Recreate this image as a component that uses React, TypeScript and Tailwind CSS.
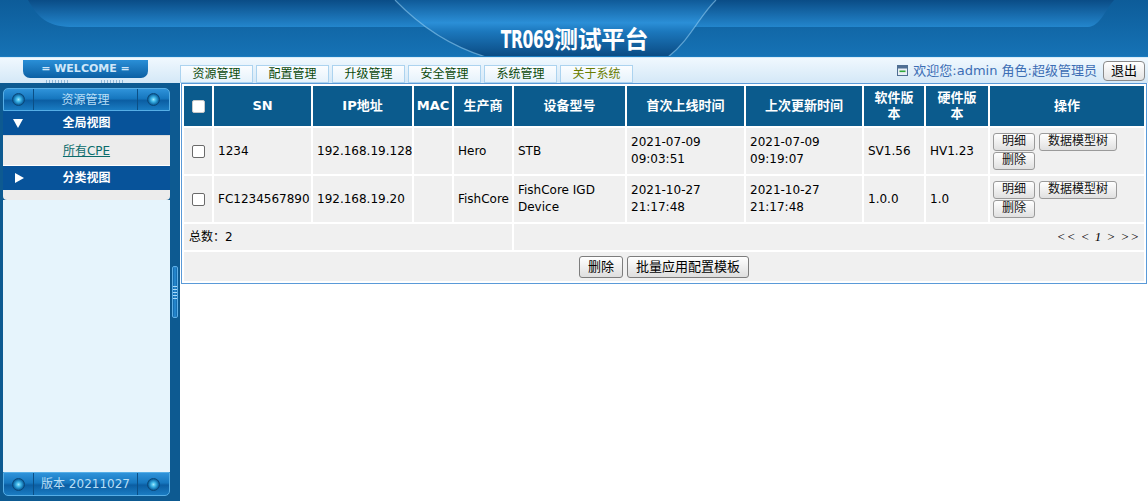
import React from "react";

const cols = [28, 97, 99, 38, 58, 111, 117, 116, 60, 62, 154];

const rows = [
  {
    sn: "1234",
    ip: "192.168.19.128",
    mac: "",
    vendor: "Hero",
    model: "STB",
    first: ["2021-07-09", "09:03:51"],
    last: ["2021-07-09", "09:19:07"],
    sw: "SV1.56",
    hw: "HV1.23",
  },
  {
    sn: "FC1234567890",
    ip: "192.168.19.20",
    mac: "",
    vendor: "FishCore",
    model: "FishCore IGD Device",
    first: ["2021-10-27", "21:17:48"],
    last: ["2021-10-27", "21:17:48"],
    sw: "1.0.0",
    hw: "1.0",
  },
];

const tabs = ["资源管理", "配置管理", "升级管理", "安全管理", "系统管理", "关于系统"];

function Btn({ children, big }: { children: React.ReactNode; big?: boolean }) {
  return (
    <button
      className={
        big
          ? "h-[22px] px-[8px] border border-[#7d7d7d] rounded-[3px] bg-linear-to-b from-white to-[#dedede] text-[13px] leading-[18px] text-black"
          : "h-[18px] px-[8px] border border-[#9a9a9a] rounded-[3px] bg-linear-to-b from-white to-[#e0e0e0] text-[12px] leading-[15px] text-[#111]"
      }
    >
      {children}
    </button>
  );
}

function Check({ head }: { head?: boolean }) {
  return (
    <span
      className={
        head
          ? "inline-block w-[13px] h-[13px] rounded-[2px] border border-[#c9c9c9] bg-white align-middle"
          : "inline-block w-[13px] h-[13px] rounded-[2px] border border-[#6a6a6a] bg-white align-middle"
      }
    />
  );
}

function Dot() {
  return (
    <span className="block w-[13px] h-[13px] rounded-full border border-[#0a4778] bg-[radial-gradient(circle_at_50%_50%,#9fe8ff_0%,#3cb4e6_30%,#0f6aa8_65%,#083e6c_100%)]" />
  );
}

function Bar({ children, top }: { children: React.ReactNode; top?: boolean }) {
  return (
    <div
      className={
        top
          ? "h-[23px] flex items-stretch rounded-t-[5px] border border-[#56aee6] bg-[linear-gradient(#2f93da,#1677bf_45%,#0b5ea3_55%,#1a7cc2)]"
          : "h-[24px] flex items-stretch rounded-b-[5px] border border-[#56aee6] bg-[linear-gradient(#2f93da,#1677bf_45%,#0b5ea3_55%,#1a7cc2)]"
      }
    >
      <div className="w-[29px] flex items-center justify-center">
        <Dot />
      </div>
      <div className="w-px bg-[#0b4f86]" />
      <div className="flex-1 flex items-center justify-center text-[12px] text-[#b8def6]">{children}</div>
      <div className="w-px bg-[#0b4f86]" />
      <div className="w-[31px] flex items-center justify-center">
        <Dot />
      </div>
    </div>
  );
}

function Tri({ down }: { down?: boolean }) {
  return (
    <svg width="10" height="10" viewBox="0 0 10 10">
      {down ? <polygon points="0,1 10,1 5,10" fill="#fff" /> : <polygon points="1,0 10,5 1,10" fill="#fff" />}
    </svg>
  );
}

function Banner() {
  return (
    <svg className="absolute inset-0 w-full h-full" viewBox="0 0 1148 57" preserveAspectRatio="none">
      <defs>
        <linearGradient id="band" x1="0" y1="0" x2="0" y2="1">
          <stop offset="0" stopColor="#0a4c86" />
          <stop offset="1" stopColor="#2386cd" />
        </linearGradient>
        <linearGradient id="low" x1="0" y1="0" x2="0" y2="1">
          <stop offset="0" stopColor="#0d5c99" />
          <stop offset="1" stopColor="#1673b6" />
        </linearGradient>
        <linearGradient id="tab" x1="0" y1="0" x2="0" y2="1">
          <stop offset="0" stopColor="#0f5a98" />
          <stop offset="0.4" stopColor="#2b8fd7" />
          <stop offset="0.55" stopColor="#1c78bd" />
          <stop offset="1" stopColor="#0a4a82" />
        </linearGradient>
      </defs>
      <rect x="0" y="0" width="1148" height="57" fill="url(#low)" />
      <path d="M28,0 C38,18 48,26 70,27 L1088,27 C1100,26 1104,12 1114,0 Z" fill="url(#band)" />
      <path d="M395,0 C420,26 450,46 486,57 L668,57 C690,40 700,15 716,0 Z" fill="url(#tab)" />
      <path d="M395,0 C420,26 450,46 486,57" fill="none" stroke="#9ad3f5" strokeOpacity="0.55" strokeWidth="1.2" />
      <path d="M668,57 C690,40 700,15 716,0" fill="none" stroke="#9ad3f5" strokeOpacity="0.55" strokeWidth="1.2" />
      <rect x="0" y="56" width="1148" height="1" fill="#1a7bbf" />
    </svg>
  );
}

export default function App() {
  return (
    <div className="h-screen w-full flex flex-col overflow-hidden bg-white font-['DejaVu_Sans','Noto_Sans_CJK_SC',sans-serif] text-black">
      <header className="relative h-[57px] shrink-0">
        <Banner />
        <div className="relative h-full flex items-end justify-center pb-[2px]">
          <span className="text-white font-bold text-[24px] leading-[30px] font-['DejaVu_Sans_Condensed','Noto_Sans_CJK_SC',sans-serif] tracking-[-0.5px]">
            <span className="inline-block scale-x-[0.72] origin-right -ml-[20px]">TR069</span>
            测试平台
          </span>
        </div>
      </header>
      <div className="h-px shrink-0 bg-[#d6ebf9]" />
      <nav className="h-[25px] shrink-0 flex bg-linear-to-b from-[#f0f8fe] to-[#d4e8f7]">
        <div className="w-[180px] flex flex-col pl-[23px] pt-[2px]">
          <div className="w-[125px] h-[18px] rounded-b-[7px] bg-linear-to-b from-[#2a8fd7] to-[#0b60a4] flex items-center justify-center text-[11px] font-bold text-[#cfe7f9] font-['DejaVu_Sans',sans-serif]">
            = WELCOME =
          </div>
          <div className="flex gap-[33px] pl-[23px] mt-[2px]">
            <div className="w-[22px] h-[3px] bg-[repeating-linear-gradient(90deg,#8db6d6_0_1px,transparent_1px_3px)]" />
            <div className="w-[22px] h-[3px] bg-[repeating-linear-gradient(90deg,#8db6d6_0_1px,transparent_1px_3px)]" />
          </div>
        </div>
        <div className="flex items-end gap-[3px]">
          {tabs.map((t, i) => (
            <div
              key={t}
              className={
                i === 5
                  ? "w-[73px] h-[18px] border border-[#acd3ef] bg-linear-to-b from-[#fbfdff] to-[#e6f2fb] flex items-center justify-center text-[12px] text-[#6a7d00]"
                  : "w-[73px] h-[18px] border border-[#acd3ef] bg-linear-to-b from-[#fbfdff] to-[#e6f2fb] flex items-center justify-center text-[12px] text-[#0b4a0b]"
              }
            >
              {t}
            </div>
          ))}
        </div>
        <div className="ml-auto flex items-center pr-[3px] gap-[5px]">
          <svg width="11" height="11" viewBox="0 0 11 11">
            <rect x="0.5" y="0.5" width="10" height="10" fill="#e8eef5" stroke="#4f6f93" />
            <rect x="1" y="1" width="9" height="2.5" fill="#4f6f93" />
            <rect x="2.5" y="5.5" width="6" height="1.6" fill="#2fa83a" />
          </svg>
          <span className="text-[13px] text-[#3c6db4]">欢迎您:admin 角色:超级管理员</span>
          <button className="ml-[1px] h-[20px] w-[42px] rounded-[4px] border border-[#8a8a8a] bg-linear-to-b from-white to-[#e4e4e4] text-[13px] leading-[17px] text-black">
            退出
          </button>
        </div>
      </nav>

      <div className="flex flex-1 min-h-0">
        <aside className="w-[180px] shrink-0 flex bg-[#0d5a91] pt-[5px] pb-[5px] pl-[3px]">
          <div className="w-[167px] flex flex-col">
            <Bar top>资源管理</Bar>
            <div className="h-[24px] grid grid-cols-[30px_1fr_30px] items-center bg-[#07539a] text-white font-bold text-[12px]">
              <div className="pl-[10px] flex">
                <Tri down />
              </div>
              <div className="text-center">全局视图</div>
              <div />
            </div>
            <div className="h-[30px] flex items-center justify-center bg-[#ececec] border-t border-[#dadada]">
              <span className="text-[12px] text-[#0a6b6b] underline">所有CPE</span>
            </div>
            <div className="h-px bg-white" />
            <div className="h-[24px] grid grid-cols-[30px_1fr_30px] items-center bg-[#07539a] text-white font-bold text-[12px]">
              <div className="pl-[11px] flex">
                <Tri />
              </div>
              <div className="text-center">分类视图</div>
              <div />
            </div>
            <div className="h-[10px] bg-[#ececec] rounded-b-[4px]" />
            <div className="flex-1 bg-[#e6f4fc]" />
            <Bar>版本 20211027</Bar>
          </div>
          <div className="w-[10px] flex items-center justify-center">
            <div className="w-[6px] h-[52px] rounded-[2px] border border-[#5fb0e8] bg-linear-to-r from-[#0f62a3] via-[#2a90d8] to-[#0f62a3] flex flex-col items-center justify-center gap-[2px]">
              <div className="w-[4px] h-px bg-[#a9d9f6]" />
              <div className="w-[4px] h-px bg-[#a9d9f6]" />
              <div className="w-[4px] h-px bg-[#a9d9f6]" />
              <div className="w-[4px] h-px bg-[#a9d9f6]" />
              <div className="w-[4px] h-px bg-[#a9d9f6]" />
            </div>
          </div>
        </aside>

        <main className="flex-1 min-w-0 px-px">
          <div className="border border-[#5a9ad8] bg-white">
            <table className="w-full table-fixed border-separate border-spacing-[2px] text-[12px]">
              <colgroup>
                {cols.map((w, i) => (
                  <col key={i} style={{ width: w }} />
                ))}
              </colgroup>
              <thead>
                <tr className="h-[40px] bg-[#0b5b8d] text-white font-bold text-[13px] leading-[16px]">
                  <th className="text-center">
                    <Check head />
                  </th>
                  <th className="px-[6px]">SN</th>
                  <th className="px-[6px]">IP地址</th>
                  <th className="px-0">MAC</th>
                  <th className="px-[4px]">生产商</th>
                  <th className="px-[6px]">设备型号</th>
                  <th className="px-[6px]">首次上线时间</th>
                  <th className="px-[6px]">上次更新时间</th>
                  <th className="px-[6px]">软件版本</th>
                  <th className="px-[6px]">硬件版本</th>
                  <th className="px-[6px]">操作</th>
                </tr>
              </thead>
              <tbody>
                {rows.map((r) => (
                  <tr key={r.sn} className="h-[46px] bg-[#f0f0f0] leading-[17px]">
                    <td className="text-center">
                      <Check />
                    </td>
                    <td className="px-[4px] whitespace-nowrap">{r.sn}</td>
                    <td className="px-[4px] whitespace-nowrap">{r.ip}</td>
                    <td className="px-[4px]">{r.mac}</td>
                    <td className="px-[4px]">{r.vendor}</td>
                    <td className="px-[4px]">{r.model}</td>
                    <td className="px-[4px]">
                      {r.first[0]}
                      <br />
                      {r.first[1]}
                    </td>
                    <td className="px-[4px]">
                      {r.last[0]}
                      <br />
                      {r.last[1]}
                    </td>
                    <td className="px-[4px]">{r.sw}</td>
                    <td className="px-[4px]">{r.hw}</td>
                    <td className="px-[3px]">
                      <div className="flex flex-wrap gap-x-[4px] gap-y-[1px]">
                        <Btn>明细</Btn>
                        <Btn>数据模型树</Btn>
                        <Btn>删除</Btn>
                      </div>
                    </td>
                  </tr>
                ))}
                <tr className="h-[26px] bg-[#f0f0f0]">
                  <td colSpan={5} className="pl-[5px]">
                    总数：2
                  </td>
                  <td colSpan={6} className="pr-[4px] text-right">
                    <span className="font-['Liberation_Serif',serif] italic text-[13px] tracking-[1px]">
                      &lt;&lt; &lt; 1 &gt; &gt;&gt;
                    </span>
                  </td>
                </tr>
                <tr className="h-[29px] bg-[#f0f0f0]">
                  <td colSpan={11}>
                    <div className="flex justify-center gap-[4px]">
                      <Btn big>删除</Btn>
                      <Btn big>批量应用配置模板</Btn>
                    </div>
                  </td>
                </tr>
              </tbody>
            </table>
          </div>
        </main>
      </div>
    </div>
  );
}
